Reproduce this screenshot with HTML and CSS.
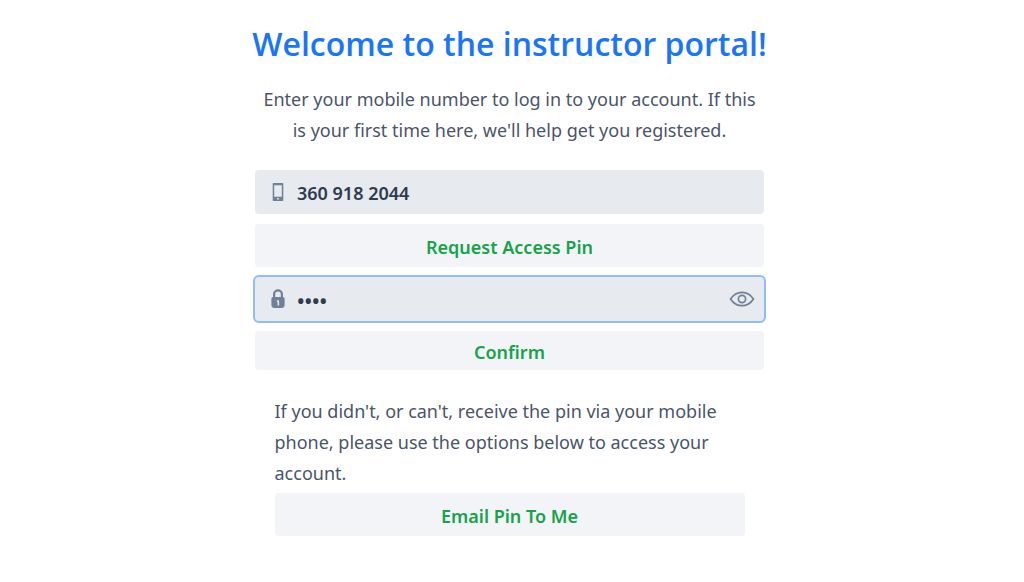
FILE: index.html
```html
<!DOCTYPE html>
<html lang="en">
  <head>
    <meta charset="UTF-8" />
    <meta name="viewport" content="width=device-width, initial-scale=1.0" />
    <title>Instructor Portal</title>
    <link rel="stylesheet" href="styles.css">
  </head>
  <body>
    <main class="portal">
      <h1>Welcome to the instructor portal!</h1>
      <p class="intro">
        Enter your mobile number to log in to your account. If this is your
        first time here, we'll help get you registered.
      </p>

      <form class="login-form">
        <div class="field">
          <label for="mobile" aria-label="Mobile number">
            <svg class="icon" width="12" height="18" viewBox="0 0 12 18">
              <path fill="currentColor" fill-rule="evenodd" d="M1.500 0h9A.8.8 0 0 1 11.300 .8v16.400a.8.8 0 0 1-.8.8h-9a.8.8 0 0 1-.8-.8V.8A.8.8 0 0 1 1.500 0zM2.200 2.200v11.600h7.600V2.200zM5 15.200v1.400h2v-1.400z" />
            </svg>
          </label>
          <input id="mobile" type="tel" value="360 918 2044" />
        </div>
        <button type="button" class="btn">Request Access Pin</button>

        <div class="field field-active">
          <label for="pin" aria-label="Access pin">
            <svg class="icon" width="14" height="20" viewBox="0 0 14 20">
              <path fill="none" stroke="currentColor" stroke-width="2.200" d="M3.100 10V5.200a3.900 3.900 0 0 1 7.800 0V10" />
              <path fill="currentColor" fill-rule="evenodd" d="M2 8h10a1.600 1.600 0 0 1 1.600 1.600v6.200A3.200 3.200 0 0 1 10.400 19H3.600A3.200 3.200 0 0 1 .4 15.800V9.600A1.600 1.600 0 0 1 2 8zM5.800 11.300v1.500h.8v3.700h1.500v-4.200a1 1 0 0 0-1-1z" />
            </svg>
          </label>
          <input id="pin" type="password" value="2044" />
          <button type="button" class="toggle" aria-label="Show pin">
            <svg width="26" height="18" viewBox="0 0 26 18" fill="none" stroke="currentColor" stroke-width="1.700">
              <path d="M1.500 9C4.500 4.500 8.500 2.300 13 2.300S21.500 4.500 24.500 9C21.500 13.500 17.500 15.700 13 15.700S4.500 13.500 1.500 9z" />
              <circle cx="13" cy="9" r="3.600" />
            </svg>
          </button>
        </div>
        <button type="button" class="btn btn-short">Confirm</button>
      </form>

      <section class="help">
        <p>
          If you didn't, or can't, receive the pin via your mobile phone,
          please use the options below to access your account.
        </p>
        <button type="button" class="btn">Email Pin To Me</button>
      </section>
    </main>
  </body>
</html>
```
FILE: styles.css
```css
* {
  box-sizing: border-box;
}

body {
  margin: 0;
  padding: 18px 20px 20px 15px;
  background: #fff;
  color: #4a5568;
  font-family: "Segoe UI", "Noto Sans", "Open Sans", sans-serif;
  font-size: 18px;
}

h1,
p {
  margin: 0;
}

.portal {
  display: flex;
  flex-direction: column;
  align-items: center;
}

h1 {
  color: #1a75f8;
  font-family: "Segoe UI", "Open Sans", sans-serif;
  font-size: 32px;
  font-weight: 600;
  line-height: 52px;
  text-align: center;
}

p {
  line-height: 31px;
}

.intro {
  max-width: 509px;
  margin-top: 14px;
  text-align: center;
}

.login-form {
  display: flex;
  flex-direction: column;
  gap: 10px;
  width: 100%;
  max-width: 509px;
  margin-top: 24px;
}

.field {
  display: flex;
  align-items: center;
  height: 44px;
  padding: 0 9px 0 16px;
  border-radius: 4px;
  background: #e7eaef;
}

.field-active {
  box-shadow: 0 0 0 2px #90bdf9;
}

.field label {
  display: flex;
  justify-content: center;
  width: 14px;
  margin-right: 12px;
  color: #718096;
}

.field input {
  flex: 1;
  min-width: 0;
  padding: 2px 0 0;
  border: none;
  outline: none;
  background: transparent;
  color: #2d3b4e;
  font: inherit;
  font-weight: 600;
}

.field input[type="password"] {
  font-size: 20px;
}

.toggle {
  display: flex;
  padding: 0;
  border: none;
  background: none;
  color: #718096;
  cursor: pointer;
}

.btn {
  width: 100%;
  height: 43px;
  padding: 2px 0 0;
  border: none;
  border-radius: 4px;
  background: #f3f4f7;
  color: #16a34a;
  font: inherit;
  font-weight: 600;
  cursor: pointer;
}

.btn-short {
  height: 39px;
}

.help {
  width: 100%;
  max-width: 470px;
  margin-top: 26px;
}

.help .btn {
  margin-top: 4px;
}
```
